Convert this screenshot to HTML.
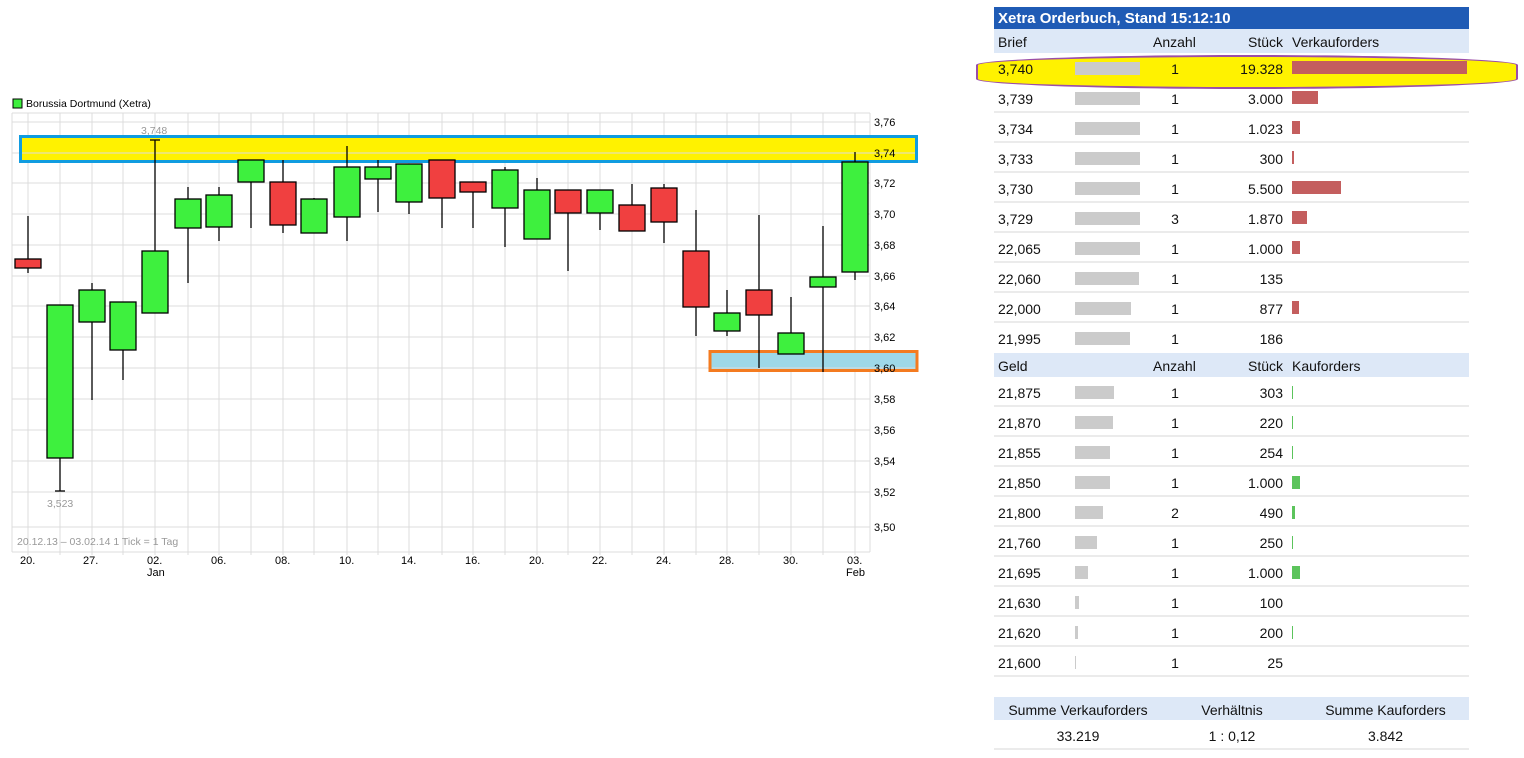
<!DOCTYPE html>
<html><head><meta charset="utf-8"><style>
body{margin:0;width:1524px;height:758px;background:#fff;position:relative;overflow:hidden;font-family:"Liberation Sans",Arial,sans-serif;}
.ob{position:absolute;left:994px;width:475px;font-size:14px;color:#111;}
.r{position:absolute;left:0;width:475px;height:28px;border-bottom:2px solid #ebebeb;}
.r span{position:absolute;top:8px;}
.p{left:4px}.a{left:176px;width:10px;text-align:center}.s{right:186px;text-align:right}
.g{position:absolute;left:81px;top:9px;height:13px;background:#cbcbcb}
.vb{position:absolute;left:298px;top:8px;height:13px;background:#c45e5e}
.kb{position:absolute;left:298px;top:9px;height:13px;background:#5cc45c}
.hd{position:absolute;left:0;width:475px;height:24px;background:#dde8f7}
.hd span{position:absolute;top:5px}
</style></head><body>
<svg width="930" height="590" style="position:absolute;left:0;top:0" font-family="Liberation Sans,Arial,sans-serif">
<rect x="13" y="99" width="9" height="9" fill="#3ef03e" stroke="#000" stroke-width="1"/>
<text x="26" y="107" font-size="10.5" fill="#000">Borussia Dortmund (Xetra)</text>
<g stroke="#dcdcdc" stroke-width="1">
<line x1="12" y1="113" x2="870" y2="113"/>
<line x1="12" y1="122" x2="870" y2="122"/><line x1="12" y1="153" x2="870" y2="153"/><line x1="12" y1="183" x2="870" y2="183"/><line x1="12" y1="214" x2="870" y2="214"/><line x1="12" y1="245" x2="870" y2="245"/><line x1="12" y1="276" x2="870" y2="276"/><line x1="12" y1="306" x2="870" y2="306"/><line x1="12" y1="337" x2="870" y2="337"/><line x1="12" y1="368" x2="870" y2="368"/><line x1="12" y1="399" x2="870" y2="399"/><line x1="12" y1="430" x2="870" y2="430"/><line x1="12" y1="461" x2="870" y2="461"/><line x1="12" y1="492" x2="870" y2="492"/><line x1="12" y1="527" x2="870" y2="527"/>
<line x1="12" y1="113" x2="12" y2="552"/><line x1="870" y1="113" x2="870" y2="552"/><line x1="12" y1="552" x2="870" y2="552"/>
<line x1="28" y1="113" x2="28" y2="555"/><line x1="60" y1="113" x2="60" y2="555"/><line x1="92" y1="113" x2="92" y2="555"/><line x1="123" y1="113" x2="123" y2="555"/><line x1="155" y1="113" x2="155" y2="555"/><line x1="188" y1="113" x2="188" y2="555"/><line x1="219" y1="113" x2="219" y2="555"/><line x1="251" y1="113" x2="251" y2="555"/><line x1="283" y1="113" x2="283" y2="555"/><line x1="314" y1="113" x2="314" y2="555"/><line x1="347" y1="113" x2="347" y2="555"/><line x1="378" y1="113" x2="378" y2="555"/><line x1="409" y1="113" x2="409" y2="555"/><line x1="442" y1="113" x2="442" y2="555"/><line x1="473" y1="113" x2="473" y2="555"/><line x1="505" y1="113" x2="505" y2="555"/><line x1="537" y1="113" x2="537" y2="555"/><line x1="568" y1="113" x2="568" y2="555"/><line x1="600" y1="113" x2="600" y2="555"/><line x1="632" y1="113" x2="632" y2="555"/><line x1="664" y1="113" x2="664" y2="555"/><line x1="696" y1="113" x2="696" y2="555"/><line x1="727" y1="113" x2="727" y2="555"/><line x1="759" y1="113" x2="759" y2="555"/><line x1="791" y1="113" x2="791" y2="555"/><line x1="823" y1="113" x2="823" y2="555"/><line x1="855" y1="113" x2="855" y2="555"/>
</g>
<rect x="20.5" y="136.5" width="896" height="25" fill="#fff200" stroke="#109ce0" stroke-width="3"/>
<rect x="710" y="351.5" width="207" height="19" fill="#9ed8e8" stroke="#f47b20" stroke-width="3"/>
<g stroke="#dcdcdc"><line x1="22" y1="153" x2="915" y2="153"/><line x1="712" y1="368" x2="915" y2="368"/></g>
<g stroke="#000" stroke-width="1.3">
<line x1="28" y1="216" x2="28" y2="273"/><line x1="60" y1="305" x2="60" y2="491"/><line x1="55" y1="491" x2="65" y2="491"/><line x1="92" y1="283" x2="92" y2="400"/><line x1="123" y1="302" x2="123" y2="380"/><line x1="155" y1="140" x2="155" y2="313"/><line x1="150" y1="140" x2="160" y2="140"/><line x1="188" y1="187" x2="188" y2="283"/><line x1="219" y1="187" x2="219" y2="241"/><line x1="251" y1="160" x2="251" y2="228"/><line x1="283" y1="160" x2="283" y2="233"/><line x1="314" y1="198" x2="314" y2="233"/><line x1="347" y1="146" x2="347" y2="241"/><line x1="378" y1="160" x2="378" y2="212"/><line x1="409" y1="164" x2="409" y2="214"/><line x1="442" y1="160" x2="442" y2="228"/><line x1="473" y1="182" x2="473" y2="228"/><line x1="505" y1="167" x2="505" y2="247"/><line x1="537" y1="178" x2="537" y2="239"/><line x1="568" y1="190" x2="568" y2="271"/><line x1="600" y1="190" x2="600" y2="230"/><line x1="632" y1="184" x2="632" y2="231"/><line x1="664" y1="184" x2="664" y2="243"/><line x1="696" y1="210" x2="696" y2="336"/><line x1="727" y1="290" x2="727" y2="336"/><line x1="759" y1="215" x2="759" y2="368"/><line x1="791" y1="297" x2="791" y2="354"/><line x1="823" y1="226" x2="823" y2="372"/><line x1="855" y1="152" x2="855" y2="280"/>
</g>
<g stroke="#000" stroke-width="1.3">
<rect x="15" y="259" width="26" height="9" fill="#f04040"/>
<rect x="47" y="305" width="26" height="153" fill="#3ef03e"/>
<rect x="79" y="290" width="26" height="32" fill="#3ef03e"/>
<rect x="110" y="302" width="26" height="48" fill="#3ef03e"/>
<rect x="142" y="251" width="26" height="62" fill="#3ef03e"/>
<rect x="175" y="199" width="26" height="29" fill="#3ef03e"/>
<rect x="206" y="195" width="26" height="32" fill="#3ef03e"/>
<rect x="238" y="160" width="26" height="22" fill="#3ef03e"/>
<rect x="270" y="182" width="26" height="43" fill="#f04040"/>
<rect x="301" y="199" width="26" height="34" fill="#3ef03e"/>
<rect x="334" y="167" width="26" height="50" fill="#3ef03e"/>
<rect x="365" y="167" width="26" height="12" fill="#3ef03e"/>
<rect x="396" y="164" width="26" height="38" fill="#3ef03e"/>
<rect x="429" y="160" width="26" height="38" fill="#f04040"/>
<rect x="460" y="182" width="26" height="10" fill="#f04040"/>
<rect x="492" y="170" width="26" height="38" fill="#3ef03e"/>
<rect x="524" y="190" width="26" height="49" fill="#3ef03e"/>
<rect x="555" y="190" width="26" height="23" fill="#f04040"/>
<rect x="587" y="190" width="26" height="23" fill="#3ef03e"/>
<rect x="619" y="205" width="26" height="26" fill="#f04040"/>
<rect x="651" y="188" width="26" height="34" fill="#f04040"/>
<rect x="683" y="251" width="26" height="56" fill="#f04040"/>
<rect x="714" y="313" width="26" height="18" fill="#3ef03e"/>
<rect x="746" y="290" width="26" height="25" fill="#f04040"/>
<rect x="778" y="333" width="26" height="21" fill="#3ef03e"/>
<rect x="810" y="277" width="26" height="10" fill="#3ef03e"/>
<rect x="842" y="162" width="26" height="110" fill="#3ef03e"/>
</g>
<g font-size="10.5" fill="#999"><text x="141" y="134">3,748</text><text x="47" y="507">3,523</text><text x="17" y="545">20.12.13 – 03.02.14   1 Tick = 1 Tag</text></g>
<g font-size="11" fill="#000">
<text x="874" y="126">3,76</text><text x="874" y="157">3,74</text><text x="874" y="187">3,72</text><text x="874" y="218">3,70</text><text x="874" y="249">3,68</text><text x="874" y="280">3,66</text><text x="874" y="310">3,64</text><text x="874" y="341">3,62</text><text x="874" y="372">3,60</text><text x="874" y="403">3,58</text><text x="874" y="434">3,56</text><text x="874" y="465">3,54</text><text x="874" y="496">3,52</text><text x="874" y="531">3,50</text>
<text x="20" y="564">20.</text><text x="83" y="564">27.</text><text x="147" y="564">02.</text><text x="147" y="576">Jan</text><text x="211" y="564">06.</text><text x="275" y="564">08.</text><text x="339" y="564">10.</text><text x="401" y="564">14.</text><text x="465" y="564">16.</text><text x="529" y="564">20.</text><text x="592" y="564">22.</text><text x="656" y="564">24.</text><text x="719" y="564">28.</text><text x="783" y="564">30.</text><text x="847" y="564">03.</text><text x="846" y="576">Feb</text>
</g>
</svg>

<div class="ob" style="top:7px">
<div style="position:absolute;left:0;top:0;width:475px;height:22px;background:#1f5bb5;color:#fff;font-weight:bold;font-size:15px"><span style="position:absolute;left:4px;top:3px">Xetra Orderbuch, Stand 15:12:10</span></div>
<div class="hd" style="top:22px"><span style="left:4px">Brief</span><span style="left:159px">Anzahl</span><span style="right:186px">Stück</span><span style="left:298px">Verkauforders</span></div>
</div>
<div style="position:absolute;left:976px;top:55px;width:538px;height:30px;background:#fff200;border:2px solid #9b4ea8;border-radius:50%/10px"></div>
<div class="ob" style="top:53px">
<div class="r" style="top:0;border:none"><span class="p">3,740</span><div class="g" style="width:65px"></div><span class="a">1</span><span class="s">19.328</span><div class="vb" style="width:175px"></div></div>
<div class="r" style="top:30px"><span class="p">3,739</span><div class="g" style="width:65px"></div><span class="a">1</span><span class="s">3.000</span><div class="vb" style="width:26px"></div></div>
<div class="r" style="top:60px"><span class="p">3,734</span><div class="g" style="width:65px"></div><span class="a">1</span><span class="s">1.023</span><div class="vb" style="width:8px"></div></div>
<div class="r" style="top:90px"><span class="p">3,733</span><div class="g" style="width:65px"></div><span class="a">1</span><span class="s">300</span><div class="vb" style="width:2px"></div></div>
<div class="r" style="top:120px"><span class="p">3,730</span><div class="g" style="width:65px"></div><span class="a">1</span><span class="s">5.500</span><div class="vb" style="width:49px"></div></div>
<div class="r" style="top:150px"><span class="p">3,729</span><div class="g" style="width:65px"></div><span class="a">3</span><span class="s">1.870</span><div class="vb" style="width:15px"></div></div>
<div class="r" style="top:180px"><span class="p">22,065</span><div class="g" style="width:65px"></div><span class="a">1</span><span class="s">1.000</span><div class="vb" style="width:8px"></div></div>
<div class="r" style="top:210px"><span class="p">22,060</span><div class="g" style="width:64px"></div><span class="a">1</span><span class="s">135</span></div>
<div class="r" style="top:240px"><span class="p">22,000</span><div class="g" style="width:56px"></div><span class="a">1</span><span class="s">877</span><div class="vb" style="width:7px"></div></div>
<div class="r" style="top:270px;border:none"><span class="p">21,995</span><div class="g" style="width:55px"></div><span class="a">1</span><span class="s">186</span></div>
<div class="hd" style="top:300px"><span style="left:4px">Geld</span><span style="left:159px">Anzahl</span><span style="right:186px">Stück</span><span style="left:298px">Kauforders</span></div>
<div class="r" style="top:324px"><span class="p">21,875</span><div class="g" style="width:39px"></div><span class="a">1</span><span class="s">303</span><div class="kb" style="width:1px"></div></div>
<div class="r" style="top:354px"><span class="p">21,870</span><div class="g" style="width:38px"></div><span class="a">1</span><span class="s">220</span><div class="kb" style="width:1px"></div></div>
<div class="r" style="top:384px"><span class="p">21,855</span><div class="g" style="width:35px"></div><span class="a">1</span><span class="s">254</span><div class="kb" style="width:1px"></div></div>
<div class="r" style="top:414px"><span class="p">21,850</span><div class="g" style="width:35px"></div><span class="a">1</span><span class="s">1.000</span><div class="kb" style="width:8px"></div></div>
<div class="r" style="top:444px"><span class="p">21,800</span><div class="g" style="width:28px"></div><span class="a">2</span><span class="s">490</span><div class="kb" style="width:3px"></div></div>
<div class="r" style="top:474px"><span class="p">21,760</span><div class="g" style="width:22px"></div><span class="a">1</span><span class="s">250</span><div class="kb" style="width:1px"></div></div>
<div class="r" style="top:504px"><span class="p">21,695</span><div class="g" style="width:13px"></div><span class="a">1</span><span class="s">1.000</span><div class="kb" style="width:8px"></div></div>
<div class="r" style="top:534px"><span class="p">21,630</span><div class="g" style="width:4px"></div><span class="a">1</span><span class="s">100</span></div>
<div class="r" style="top:564px"><span class="p">21,620</span><div class="g" style="width:3px"></div><span class="a">1</span><span class="s">200</span><div class="kb" style="width:1px"></div></div>
<div class="r" style="top:594px"><span class="p">21,600</span><div class="g" style="width:1px"></div><span class="a">1</span><span class="s">25</span></div>
<div class="hd" style="top:644px;height:23px;text-align:center"><span style="left:0;width:168px">Summe Verkauforders</span><span style="left:168px;width:140px">Verhältnis</span><span style="left:308px;width:167px">Summe Kauforders</span></div>
<div class="r" style="top:667px;text-align:center"><span style="left:0;width:168px">33.219</span><span style="left:168px;width:140px">1 : 0,12</span><span style="left:308px;width:167px">3.842</span></div>
</div>
</body></html>
